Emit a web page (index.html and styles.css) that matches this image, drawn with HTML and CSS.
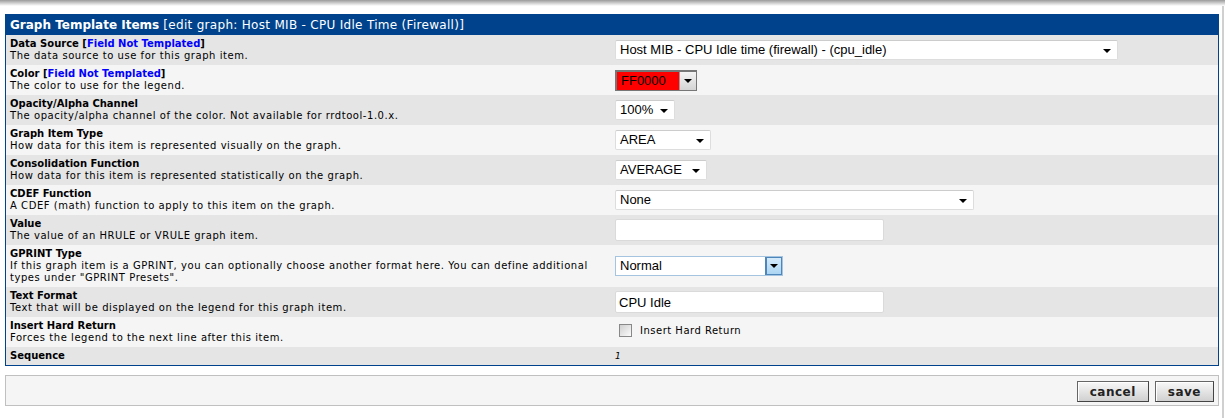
FILE: index.html
```html
<!DOCTYPE html>
<html lang="en">
<head>
  <meta charset="UTF-8" />
  <title>Graph Template Items</title>
  <link rel="stylesheet" href="styles.css">
</head>
<body>
  <div class="topbar"></div>
  <div class="page">
    <form class="edit-box">
      <div class="header"><b>Graph Template Items</b> [edit graph: Host MIB - CPU Idle Time (Firewall)]</div>
      <table class="items">
        <tr class="dark">
          <td class="info"><b>Data Source [<span class="tmpl">Field Not Templated</span>]</b><br>The data source to use for this graph item.</td>
          <td><span class="sel w-ds">Host MIB - CPU Idle time (firewall) - (cpu_idle)</span></td>
        </tr>
        <tr class="light">
          <td class="info"><b>Color [<span class="tmpl">Field Not Templated</span>]</b><br>The color to use for the legend.</td>
          <td><span class="color-sel"><span class="swatch">FF0000</span><span class="btn"></span></span></td>
        </tr>
        <tr class="dark">
          <td class="info"><b>Opacity/Alpha Channel</b><br>The opacity/alpha channel of the color. Not available for rrdtool-1.0.x.</td>
          <td><span class="sel w-op">100%</span></td>
        </tr>
        <tr class="light">
          <td class="info"><b>Graph Item Type</b><br>How data for this item is represented visually on the graph.</td>
          <td><span class="sel w-type">AREA</span></td>
        </tr>
        <tr class="dark">
          <td class="info"><b>Consolidation Function</b><br>How data for this item is represented statistically on the graph.</td>
          <td><span class="sel w-cf">AVERAGE</span></td>
        </tr>
        <tr class="light">
          <td class="info"><b>CDEF Function</b><br>A CDEF (math) function to apply to this item on the graph.</td>
          <td><span class="sel w-cdef">None</span></td>
        </tr>
        <tr class="dark">
          <td class="info"><b>Value</b><br>The value of an HRULE or VRULE graph item.</td>
          <td><input class="txt" type="text" value=""></td>
        </tr>
        <tr class="light">
          <td class="info"><b>GPRINT Type</b><br>If this graph item is a GPRINT, you can optionally choose another format here. You can define additional types under "GPRINT Presets".</td>
          <td><span class="xp-sel"><span class="val">Normal</span><span class="btn"></span></span></td>
        </tr>
        <tr class="dark">
          <td class="info"><b>Text Format</b><br>Text that will be displayed on the legend for this graph item.</td>
          <td><input class="txt" type="text" value="CPU Idle"></td>
        </tr>
        <tr class="light">
          <td class="info"><b>Insert Hard Return</b><br>Forces the legend to the next line after this item.</td>
          <td><label class="check"><span class="box"></span>Insert Hard Return</label></td>
        </tr>
        <tr class="dark">
          <td class="info"><b>Sequence</b></td>
          <td><i class="seq">1</i></td>
        </tr>
      </table>
    </form>

    <div class="actions">
      <button type="button">cancel</button>
      <button type="button">save</button>
    </div>
  </div>
</body>
</html>
```

FILE: styles.css
```css
body {
  margin: 0;
  background: #fff;
  font-family: "DejaVu Sans", Verdana, sans-serif;
  font-size: 10px;
  color: #000;
}

.topbar {
  height: 6px;
  background: linear-gradient(#9a9a9a, #d8d8d8 60%, #fff);
}

.page {
  width: 1214px;
  padding: 8px 3px 12px 5px;
  border-right: 2px solid #d0d0d0;
}

.edit-box {
  border: 1px solid #00438c;
  margin: 0;
}

.header {
  background: #00438c;
  color: #fff;
  font-size: 12px;
  letter-spacing: 0.3px;
  height: 20px;
  line-height: 20px;
  padding-left: 4px;
}

.header b {
  letter-spacing: 0;
}

.items {
  width: 100%;
  border-collapse: collapse;
}

.items td {
  padding: 3px 4px;
  line-height: 12px;
  vertical-align: middle;
  letter-spacing: 0.55px;
}

.items td b {
  letter-spacing: 0;
}

.items td.info {
  width: 50%;
}

.items td + td {
  padding-left: 3px;
  letter-spacing: 0;
}

.dark {
  background: #e5e5e5;
}

.light {
  background: #f5f5f5;
}

.tmpl {
  color: #0000ff;
}

/* selects */
.sel {
  position: relative;
  display: inline-block;
  box-sizing: border-box;
  height: 20px;
  line-height: 18px;
  padding: 0 20px 0 4px;
  background: #fff;
  border: 1px solid #ddd;
  border-top-color: #ccc;
  border-radius: 2px;
  font-family: "Liberation Sans", Arial, sans-serif;
  font-size: 13px;
  vertical-align: middle;
}

.sel::after {
  content: "";
  position: absolute;
  right: 6px;
  top: 8px;
  border-left: 4px solid transparent;
  border-right: 4px solid transparent;
  border-top: 4px solid #000;
}

.w-ds { width: 503px; }
.w-op { width: 60px; }
.w-type { width: 96px; }
.w-cf { width: 92px; }
.w-cdef { width: 359px; }

.color-sel {
  display: inline-flex;
  box-sizing: border-box;
  width: 82px;
  height: 21px;
  border: 1px solid #777;
  border-top-width: 2px;
  border-left-width: 2px;
  background: #ff0000;
  font-family: "Liberation Sans", Arial, sans-serif;
  font-size: 13px;
  vertical-align: middle;
}

.color-sel .swatch {
  flex: 1;
  line-height: 18px;
  padding-left: 4px;
}

.color-sel .btn {
  position: relative;
  width: 16px;
  background: linear-gradient(#f4f4f4, #d4d4d4);
  border-left: 1px solid #999;
}

.color-sel .btn::after,
.xp-sel .btn::after {
  content: "";
  position: absolute;
  left: 4px;
  top: 7px;
  border-left: 4px solid transparent;
  border-right: 4px solid transparent;
  border-top: 4px solid #000;
}

.xp-sel {
  display: inline-flex;
  box-sizing: border-box;
  width: 168px;
  height: 20px;
  border: 1px solid #a5c4e0;
  background: #fff;
  font-family: "Liberation Sans", Arial, sans-serif;
  font-size: 13px;
  vertical-align: middle;
}

.xp-sel .val {
  flex: 1;
  line-height: 18px;
  padding-left: 4px;
}

.xp-sel .btn {
  position: relative;
  width: 16px;
  background: linear-gradient(#d8ecfb, #a9d4f3);
  border-left: 1px solid #4f86b9;
  box-shadow: inset 0 0 0 1px #4f86b9;
}

.txt {
  box-sizing: border-box;
  width: 269px;
  height: 22px;
  margin: 0;
  padding: 0 3px;
  border: 1px solid #dadada;
  border-radius: 2px;
  background: #fff;
  font-family: "Liberation Sans", Arial, sans-serif;
  font-size: 13px;
  color: #000;
  vertical-align: middle;
}

.check {
  display: inline-flex;
  align-items: center;
  margin-left: 4px;
  letter-spacing: 0.5px;
}

.check .box {
  display: inline-block;
  width: 11px;
  height: 11px;
  margin-right: 8px;
  border: 1px solid #888;
  background: linear-gradient(135deg, #cfcfcf, #fbfbfb);
}

.seq {
  font-size: 9px;
}

/* bottom bar */
.actions {
  display: flex;
  justify-content: flex-end;
  gap: 6px;
  margin-top: 9px;
  padding: 5px 4px 3px;
  background: #f5f5f5;
  border: 1px solid #c0c0c0;
}

.actions button {
  height: 21px;
  padding: 0 12px;
  border: 1px solid #666;
  border-right-color: #444;
  border-bottom-color: #444;
  background: linear-gradient(#f8f8f8, #d0d0d0);
  box-shadow: inset 1px 1px 0 #fff;
  font-family: "DejaVu Sans", Verdana, sans-serif;
  font-weight: bold;
  font-size: 12px;
  letter-spacing: 0.5px;
  color: #222;
  cursor: pointer;
}
```
